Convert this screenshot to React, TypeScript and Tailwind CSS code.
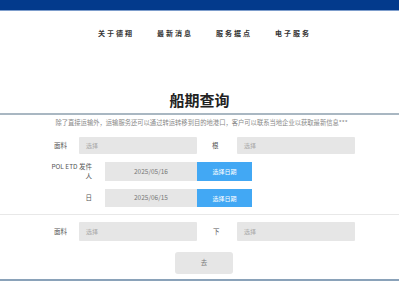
import React from 'react';

const font = { fontFamily: '"Noto Sans CJK SC", "Noto Sans", sans-serif' };

const navItems = ['关于德翔', '最新消息', '服务据点', '电子服务'];

const SelectBox: React.FC<{ w: string }> = ({ w }) => (
  <div className={`${w} h-full bg-[#e6e6e6] rounded-[1px] flex items-center pl-[7px] text-[6px] text-[#a8a8a8]`}>选择</div>
);

const App: React.FC = () => {
  return (
    <div className="w-[399px] h-[300px] bg-white overflow-hidden" style={font}>
      <div className="h-[10px] bg-[#033a8c]" />
      <div className="h-[1px] bg-[#7d9dcc]" />

      <nav className="mt-[18px] flex justify-center gap-[23px] pl-[10px] text-[7px] leading-[8px] font-bold tracking-[2px] text-[#333]">
        {navItems.map((item) => (
          <span key={item}>{item}</span>
        ))}
      </nav>

      <h1 className="mt-[53px] text-center text-[15px] leading-[20px] font-bold text-[#222]">船期查询</h1>
      <div className="mt-[3px] h-[2px] bg-[#a9b7c2]" />

      <p className="mt-[4px] pl-[4px] text-center text-[6.3px] leading-[8px] text-[#888]">
        除了直接运输外，运输服务还可以通过转运转移到目的地港口，客户可以联系当地企业以获取最新信息***
      </p>

      <div className="mt-[10px] flex h-[17px] text-[6.5px] text-[#555]">
        <div className="w-[79px] pr-[12px] flex items-center justify-end">面料</div>
        <SelectBox w="w-[118px]" />
        <div className="w-[40px] pl-[15px] flex items-center">根</div>
        <SelectBox w="w-[118px]" />
      </div>

      <div className="mt-[8px] flex h-[19px] text-[6.5px] text-[#555]">
        <div className="w-[105px] pr-[13px] flex flex-col items-end justify-center text-right leading-[9.5px]">
          <span>POL ETD 发件</span>
          <span>人</span>
        </div>
        <div className="w-[92px] h-full bg-[#e6e6e6] flex items-center justify-center text-[#777]">2025/05/16</div>
        <div className="w-[55px] h-full bg-[#42a8f4] flex items-center justify-center text-white text-[6px]">选择日期</div>
      </div>

      <div className="mt-[8px] flex h-[18px] text-[6.5px] text-[#555]">
        <div className="w-[105px] pr-[13px] flex items-center justify-end">日</div>
        <div className="w-[92px] h-full bg-[#e6e6e6] flex items-center justify-center text-[#777]">2025/06/15</div>
        <div className="w-[55px] h-full bg-[#42a8f4] flex items-center justify-center text-white text-[6px]">选择日期</div>
      </div>

      <div className="mt-[7px] h-[1px] bg-[#e8e8e8]" />

      <div className="mt-[7px] flex h-[19px] text-[6.5px] text-[#555]">
        <div className="w-[79px] pr-[12px] flex items-center justify-end">面料</div>
        <SelectBox w="w-[118px]" />
        <div className="w-[40px] pl-[16px] flex items-center">下</div>
        <SelectBox w="w-[118px]" />
      </div>

      <div className="mt-[11px] flex justify-center pl-[9px]">
        <button type="button" className="w-[58px] h-[22px] bg-[#e6e6e6] rounded-[3px] text-[6.5px] text-[#777]">去</button>
      </div>

      <div className="mt-[5px] h-[2px] bg-[#8aa2b9]" />
    </div>
  );
};

export default App;
